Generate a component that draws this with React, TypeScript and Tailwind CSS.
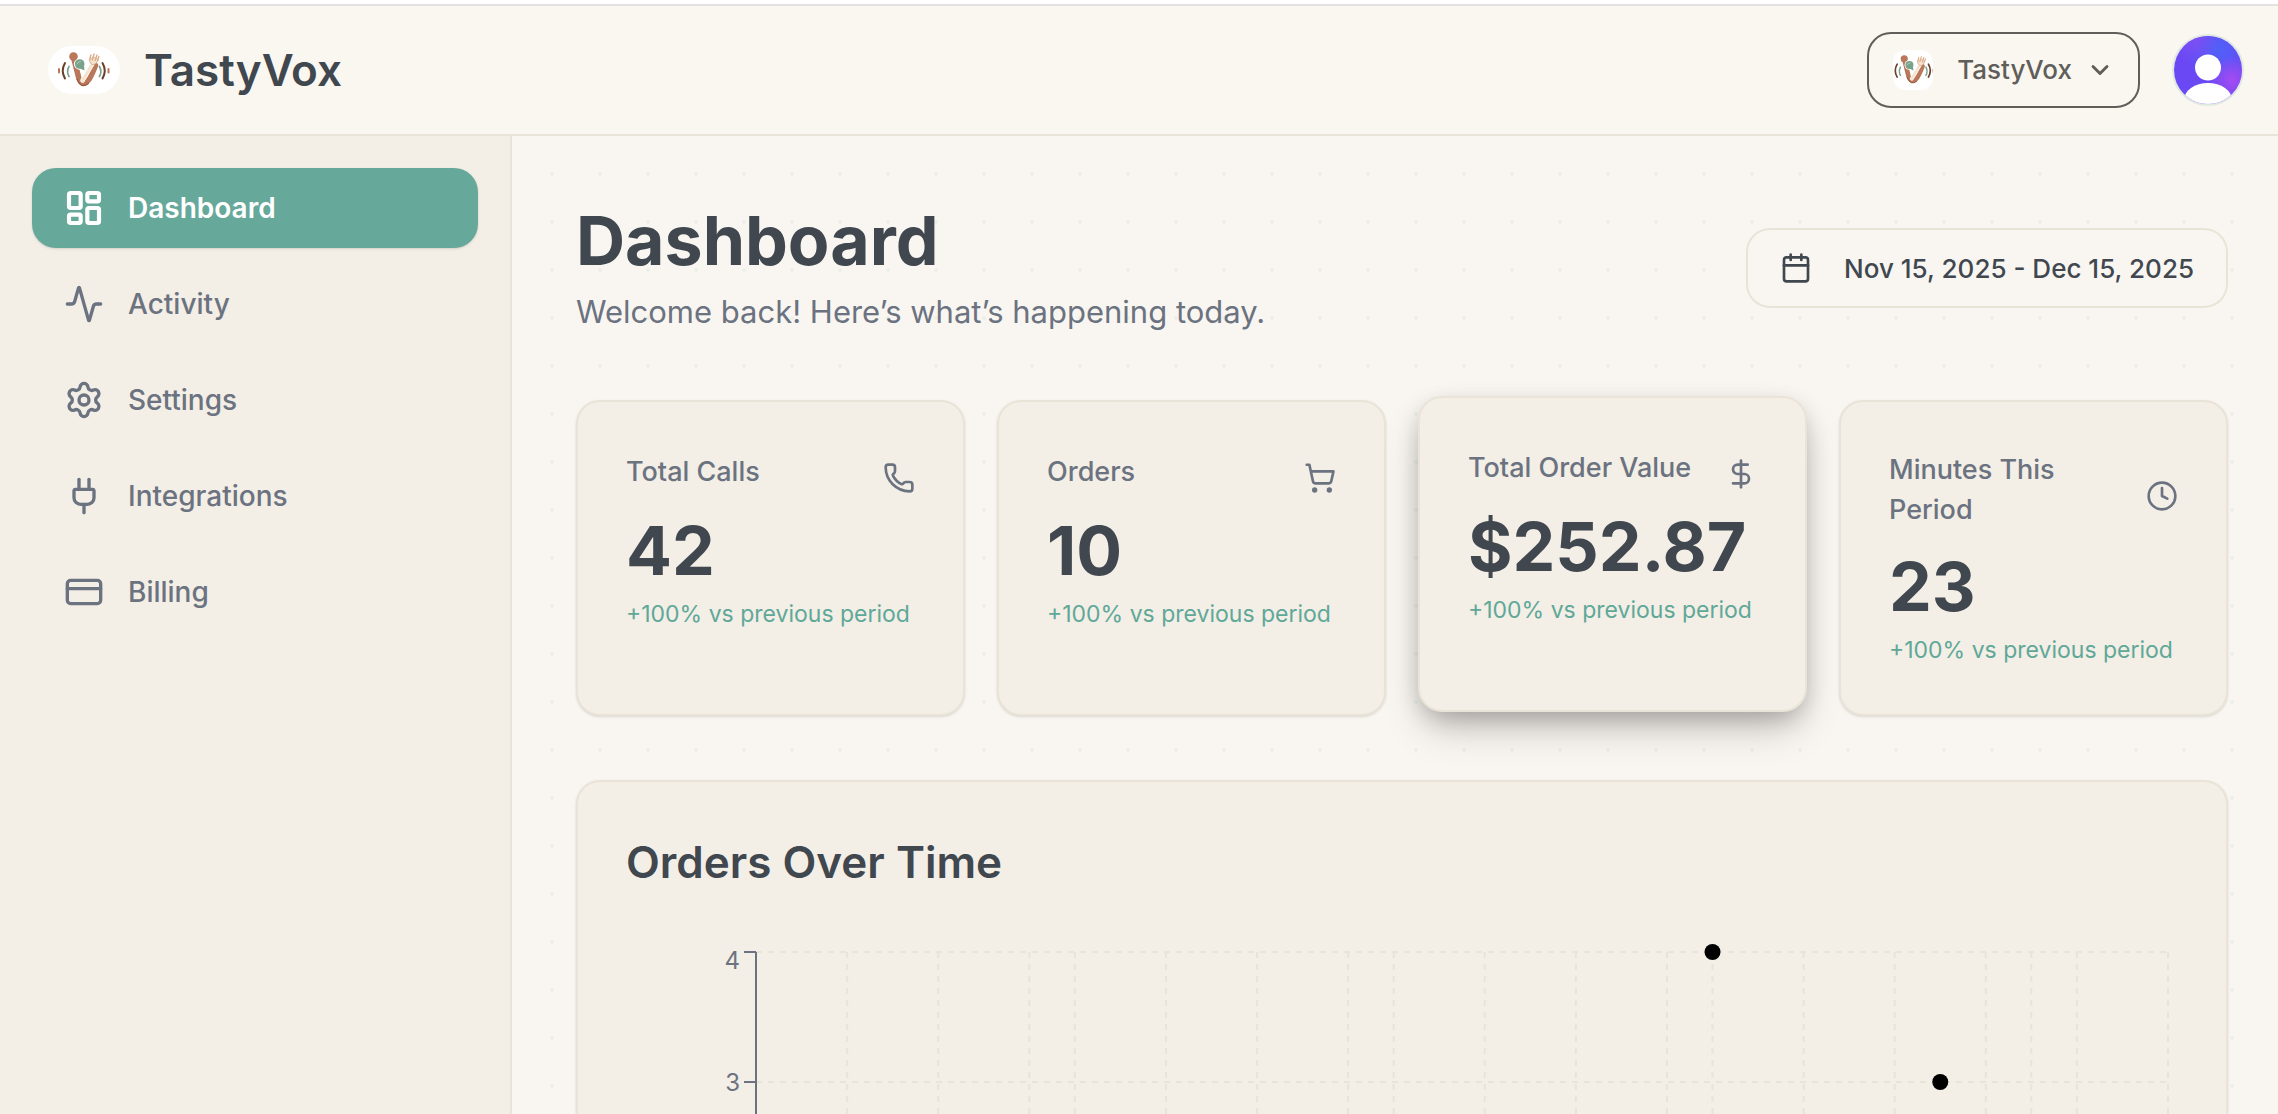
import {
  Activity,
  Calendar,
  ChevronDown,
  Clock,
  CreditCard,
  DollarSign,
  LayoutDashboard,
  Phone,
  Plug,
  Settings,
  ShoppingCart,
  type LucideIcon,
} from 'lucide-react';

interface NavItem {
  label: string;
  icon: LucideIcon;
  active?: boolean;
}

interface Stat {
  label: string;
  value: string;
  icon: LucideIcon;
  raised?: boolean;
}

const navItems: NavItem[] = [
  { label: 'Dashboard', icon: LayoutDashboard, active: true },
  { label: 'Activity', icon: Activity },
  { label: 'Settings', icon: Settings },
  { label: 'Integrations', icon: Plug },
  { label: 'Billing', icon: CreditCard },
];

const stats: Stat[] = [
  { label: 'Total Calls', value: '42', icon: Phone },
  { label: 'Orders', value: '10', icon: ShoppingCart },
  { label: 'Total Order Value', value: '$252.87', icon: DollarSign, raised: true },
  { label: 'Minutes This Period', value: '23', icon: Clock },
];

// the chart has one slot per day, only some of them get a grid line
const DAYS = 31;
const gridDays = [2, 4, 6, 7, 9, 11, 13, 14, 16, 18, 20, 21, 23, 25, 27, 28, 29, 31];
const yTicks = [4, 3];
const orders = [
  { day: 21, count: 4 },
  { day: 26, count: 3 },
];

const dayX = (day: number) => `${(day / DAYS) * 100}%`;
const countY = (count: number) => 10 + (4 - count) * 130;

const Logo = ({ viewBox, className }: { viewBox: string; className: string }) => (
  <svg viewBox={viewBox} className={className} fill="none" strokeLinecap="round" aria-hidden="true">
    <rect width="72" height="48" fill="#ffffff" />
    {/* handset */}
    <path d="M25.5 11 L30.5 31 Q33.5 41 40.5 34 Q43 31 47.5 19.5" stroke="#b9785a" strokeWidth="5.5" strokeLinejoin="round" />
    <circle cx="25.5" cy="10.5" r="4.3" fill="#b9785a" />
    <path d="M29 33 Q33 43.5 40.5 37.5" stroke="#995a41" strokeWidth="1.2" />
    {/* fork */}
    <path d="M34.5 34.5 L44.5 17.5" stroke="#ffffff" strokeWidth="4.5" />
    <path d="M34.5 34.5 L44.5 17.5" stroke="#f5e4cb" strokeWidth="3" />
    <path d="M41.5 14 Q42 19 46 18.5 Q49 18 50 13.5 L46 11 Z" fill="#f5e4cb" stroke="#c68d6c" strokeWidth="0.6" />
    <path d="M41.5 14 L43 8.8 M44.3 14 L46 8 M47.2 14.5 L49 9 M49.8 14.5 L50.8 10.5" stroke="#d9aa88" strokeWidth="1.3" />
    {/* speech bubble */}
    <circle cx="31.7" cy="18" r="5.8" fill="#ffffff" />
    <circle cx="31.7" cy="18" r="4.8" fill="#78a38a" />
    <path d="M31 22 L36.5 24.5 L35.8 18 Z" fill="#78a38a" />
    <path d="M29 18 Q29.5 15.5 32.5 15.5" stroke="#c3d6c8" strokeWidth="0.8" />
    {/* sound waves */}
    <path d="M21 20.5 Q18.2 25.5 21 30.5" stroke="#78a38a" strokeWidth="1.7" />
    <path d="M17 17 Q12.5 24.8 17 32.5" stroke="#6b3f2a" strokeWidth="2" />
    <path d="M11 23 V26.5" stroke="#b9785a" strokeWidth="2" />
    <path d="M51.5 20.5 Q54.3 25.5 51.5 30.5" stroke="#78a38a" strokeWidth="1.7" />
    <path d="M54.5 17 Q59 24.8 54.5 32.5" stroke="#6b3f2a" strokeWidth="2" />
    <path d="M60.5 23 V26.5" stroke="#b9785a" strokeWidth="2" />
  </svg>
);

const Avatar = () => (
  <svg viewBox="0 0 68 68" className="size-full rounded-full" aria-hidden="true">
    <defs>
      <radialGradient id="avatarBlue" cx="0.65" cy="0.2" r="0.5">
        <stop offset="0" stopColor="#4f62f8" />
        <stop offset="1" stopColor="#4f62f8" stopOpacity="0" />
      </radialGradient>
      <radialGradient id="avatarPink" cx="0.85" cy="0.65" r="0.35">
        <stop offset="0" stopColor="#a44cf2" />
        <stop offset="1" stopColor="#a44cf2" stopOpacity="0" />
      </radialGradient>
      <radialGradient id="avatarViolet" cx="0.3" cy="0.05" r="0.35">
        <stop offset="0" stopColor="#7d4ff3" />
        <stop offset="1" stopColor="#7d4ff3" stopOpacity="0" />
      </radialGradient>
    </defs>
    <rect width="68" height="68" fill="#6a48f4" />
    <rect width="68" height="68" fill="url(#avatarBlue)" />
    <rect width="68" height="68" fill="url(#avatarPink)" />
    <rect width="68" height="68" fill="url(#avatarViolet)" />
    <circle cx="34" cy="31.5" r="13" fill="#ffffff" />
    <ellipse cx="34" cy="64" rx="24" ry="17" fill="#ffffff" />
  </svg>
);

const Header = () => (
  <header className="flex h-[130px] shrink-0 items-center justify-between border-b-2 border-[#e9e4d7] bg-[#faf7f0] pr-[34px] pl-12">
    <a href="#" className="flex items-center gap-6">
      <Logo viewBox="0 0 72 48" className="h-12 w-[72px] rounded-3xl" />
      <span className="text-[44px] leading-[64px] font-semibold">TastyVox</span>
    </a>
    <div className="flex items-center gap-8">
      <button className="flex h-[76px] items-center rounded-3xl border-2 border-[#5f5e5a] px-6 text-[#5f5e5a]">
        <Logo viewBox="12 0 48 48" className="mr-6 size-10 rounded-xl" />
        <span className="mr-3.5 text-[26px] leading-10 font-medium">TastyVox</span>
        <ChevronDown className="size-7" strokeWidth={2.5} />
      </button>
      <button aria-label="Account" className="size-[72px] rounded-full border-2 border-[#dfe9e2]">
        <Avatar />
      </button>
    </div>
  </header>
);

const Sidebar = () => (
  <aside className="w-[512px] shrink-0 border-r-2 border-[#e9e4d7] bg-[#f3eee6] px-8 py-8">
    <nav className="flex flex-col gap-4">
      {navItems.map(({ label, icon: Icon, active }) => (
        <a
          key={label}
          href="#"
          className={
            active
              ? 'flex h-20 items-center gap-6 rounded-3xl bg-[#66a99b] px-8 text-[28px] font-semibold text-white shadow-sm'
              : 'flex h-20 items-center gap-6 rounded-3xl px-8 text-[28px] font-medium text-[#6b7280]'
          }
        >
          <Icon className="size-10" strokeWidth={active ? 2.5 : 2} />
          {label}
        </a>
      ))}
    </nav>
  </aside>
);

const StatCard = ({ label, value, icon: Icon, raised }: Stat) => (
  <section
    className={
      raised
        ? 'relative -top-1 rounded-3xl border-2 border-[#e9e4d7] bg-[#f3eee6] p-12 shadow-[0_20px_40px_-8px_rgba(0,0,0,0.25),0_8px_24px_-4px_rgba(0,0,0,0.2)]'
        : 'rounded-3xl border-2 border-[#e9e4d7] bg-[#f3eee6] p-12 shadow-sm'
    }
  >
    <div className="flex items-center justify-between gap-4">
      <h2 className="text-[27px] leading-10 font-medium text-[#6b7280]">{label}</h2>
      <Icon className="box-content size-8 shrink-0 pt-3 text-[#6b7280]" />
    </div>
    <p className="mt-4 text-[68px] leading-20 font-bold">{value}</p>
    <p className="mt-2 text-[23px] leading-8 whitespace-nowrap text-[#5fa898]">+100% vs previous period</p>
  </section>
);

const OrdersChart = () => (
  <section className="mt-16 rounded-3xl border-2 border-[#e9e4d7] bg-[#f3eee6] p-12 shadow-sm">
    <h2 className="text-[44px] leading-16 font-semibold">Orders Over Time</h2>
    <div className="mt-12 pr-2.5 pl-[130px]">
      <svg className="block h-[600px] w-full overflow-visible" role="img" aria-label="Orders per day">
        <g stroke="#e9e4d7" strokeWidth="2" strokeDasharray="6 6">
          {yTicks.map((count) => (
            <line key={count} x1="0" x2="100%" y1={countY(count)} y2={countY(count)} />
          ))}
          {gridDays.map((day) => (
            <line key={day} x1={dayX(day)} x2={dayX(day)} y1={countY(4)} y2="100%" />
          ))}
        </g>
        <g stroke="#6b7280" strokeWidth="2">
          <line x1="0" x2="0" y1={countY(4)} y2="100%" />
          {yTicks.map((count) => (
            <line key={count} x1="-12" x2="0" y1={countY(count)} y2={countY(count)} />
          ))}
        </g>
        <g fill="#6b7280" fontSize="24" textAnchor="end">
          {yTicks.map((count) => (
            <text key={count} x="-16" y={countY(count) + (count === 4 ? 17 : 9)}>
              {count}
            </text>
          ))}
        </g>
        {orders.map(({ day, count }) => (
          <circle key={day} cx={dayX(day)} cy={countY(count)} r="8" fill="#000000" />
        ))}
      </svg>
    </div>
  </section>
);

export default function App() {
  return (
    <div className="flex h-screen flex-col overflow-hidden bg-white pt-1 font-['Inter',sans-serif] text-[#40474f]">
      <div className="flex min-h-0 flex-1 flex-col border-t-2 border-[#e2e2e2] bg-[#f9f6f1] bg-[radial-gradient(circle,#edefe9_2px,transparent_2px)] bg-[length:48px_48px]">
        <Header />
        <div className="flex min-h-0 flex-1">
          <Sidebar />
          <main className="min-w-0 flex-1 overflow-hidden pt-16 pr-[50px] pl-16">
            <div className="flex items-center justify-between">
              <div>
                <h1 className="text-[68px] leading-20 font-bold">Dashboard</h1>
                <p className="mt-2 text-[31px] leading-12 text-[#6b7280]">
                  Welcome back! Here’s what’s happening today.
                </p>
              </div>
              <button className="flex h-20 items-center gap-8 rounded-3xl border-2 border-[#e9e4d7] bg-[#f9f6f1] px-8 text-[26px] font-medium">
                <Calendar className="size-8" />
                Nov 15, 2025 - Dec 15, 2025
              </button>
            </div>
            <div className="mt-16 grid grid-cols-4 gap-8">
              {stats.map((stat) => (
                <StatCard key={stat.label} {...stat} />
              ))}
            </div>
            <OrdersChart />
          </main>
        </div>
      </div>
    </div>
  );
}
